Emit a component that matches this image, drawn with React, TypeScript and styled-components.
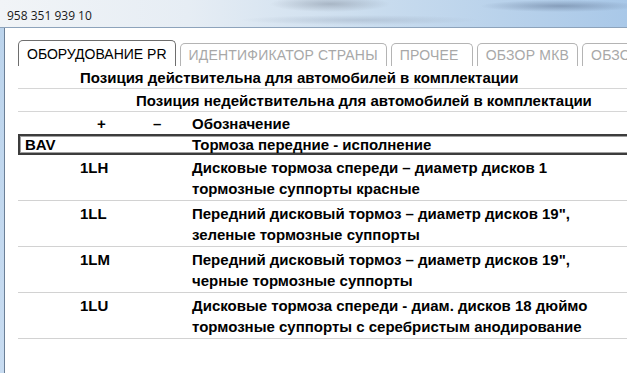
import styled, { createGlobalStyle } from 'styled-components';

type Item = {
  code: string;
  lines: string[];
};

const items: Item[] = [
  {
    code: '1LH',
    lines: ['Дисковые тормоза спереди – диаметр дисков 1', 'тормозные суппорты красные'],
  },
  {
    code: '1LL',
    lines: ['Передний дисковый тормоз – диаметр дисков 19",', 'зеленые тормозные суппорты'],
  },
  {
    code: '1LM',
    lines: ['Передний дисковый тормоз – диаметр дисков 19",', 'черные тормозные суппорты'],
  },
  {
    code: '1LU',
    lines: [
      'Дисковые тормоза спереди - диам. дисков 18 дюймо',
      'тормозные суппорты с серебристым анодирование',
    ],
  },
];

const tabs = ['ОБОРУДОВАНИЕ PR', 'ИДЕНТИФИКАТОР СТРАНЫ', 'ПРОЧЕЕ', 'ОБЗОР МКВ', 'ОБЗОР'];

const GlobalStyle = createGlobalStyle`
  html, body {
    margin: 0;
    padding: 0;
    background: #ffffff;
    overflow: hidden;
  }
  body {
    font-family: 'Liberation Sans', Arial, sans-serif;
  }
`;

export default function App() {
  return (
    <>
      <GlobalStyle />
      <Window>
        <TitleBar>
          <Caption>958 351 939 10</Caption>
        </TitleBar>
        <Body>
          <Frame />
          <Content>
            <TabStrip>
              {tabs.map((t, i) => (
                <Tab key={t} $active={i === 0}>
                  {t}
                </Tab>
              ))}
            </TabStrip>
            <Table>
              <HeadRow $line>
                <HeadCell $from={2}>Позиция действительна для автомобилей в комплектации</HeadCell>
              </HeadRow>
              <HeadRow $line>
                <HeadCell $from={3}>Позиция недействительна для автомобилей в комплектации</HeadCell>
              </HeadRow>
              <HeadRow>
                <Sign $from={2}>+</Sign>
                <Sign $from={3}>–</Sign>
                <HeadCell $from={4}>Обозначение</HeadCell>
              </HeadRow>
              <GroupRow>
                <GroupCode>BAV</GroupCode>
                <GroupText>Тормоза передние - исполнение</GroupText>
              </GroupRow>
              {items.map((it) => (
                <ItemRow key={it.code}>
                  <Code>{it.code}</Code>
                  <Desc>
                    {it.lines.map((l) => (
                      <div key={l}>{l}</div>
                    ))}
                  </Desc>
                </ItemRow>
              ))}
            </Table>
          </Content>
        </Body>
      </Window>
    </>
  );
}

const Window = styled.div`
  width: 627px;
  height: 373px;
  display: flex;
  flex-direction: column;
  overflow: hidden;
`;

const TitleBar = styled.div`
  height: 27px;
  flex-shrink: 0;
  display: flex;
  align-items: center;
  padding-left: 7px;
  background:
    radial-gradient(ellipse 60px 8px at 330px 4px, rgba(120, 130, 145, 0.45), transparent),
    radial-gradient(ellipse 80px 6px at 560px 6px, rgba(90, 110, 140, 0.5), transparent),
    radial-gradient(ellipse 120px 5px at 360px 20px, rgba(150, 165, 185, 0.4), transparent),
    linear-gradient(90deg, #f1f4f7 0%, #e6edf4 30%, #c9dcee 60%, #a9c8e8 100%);
  border-bottom: 1px solid #8da3bb;
`;

const Caption = styled.span`
  font-family: 'Open Sans', 'Noto Sans', sans-serif;
  font-size: 12px;
  color: #1a1a1a;
  margin-top: 4px;
`;

const Body = styled.div`
  flex: 1;
  display: flex;
  min-height: 0;
`;

const Frame = styled.div`
  width: 4px;
  flex-shrink: 0;
  background: linear-gradient(180deg, #bcd4ec, #c8dcf1);
  border-right: 1px solid #6b7f96;
`;

const Content = styled.div`
  flex: 1;
  background: #ffffff;
  padding: 12px 0 0 13px;
  overflow: hidden;
`;

const TabStrip = styled.div`
  display: flex;
  align-items: flex-end;
  gap: 4px;
  height: 26px;
  white-space: nowrap;
`;

const Tab = styled.div<{ $active?: boolean }>`
  box-sizing: border-box;
  height: ${({ $active }) => ($active ? '26px' : '23px')};
  min-width: 82px;
  padding: 0 8px;
  display: flex;
  align-items: center;
  font-size: 14px;
  letter-spacing: ${({ $active }) => ($active ? '0' : '0.2px')};
  color: ${({ $active }) => ($active ? '#000000' : '#a8a8a8')};
  background: #ffffff;
  border: 1px solid ${({ $active }) => ($active ? '#6e6e6e' : '#b4b4b4')};
  border-bottom: none;
  border-radius: 5px 5px 0 0;
  flex-shrink: 0;
`;

const Table = styled.div`
  width: 620px;
  font-size: 15px;
  font-weight: bold;
  color: #000000;
`;

const HeadRow = styled.div<{ $line?: boolean }>`
  display: grid;
  grid-template-columns: 62px 56px 56px 1fr;
  height: 22px;
  align-items: center;
  border-bottom: ${({ $line }) => ($line ? '1px solid #d6d6d6' : 'none')};
`;

const HeadCell = styled.div<{ $from: number }>`
  grid-column: ${({ $from }) => `${$from} / -1`};
  white-space: nowrap;
`;

const Sign = styled.div<{ $from: number }>`
  grid-column: ${({ $from }) => $from};
  padding-left: 17px;
`;

const GroupRow = styled.div`
  box-sizing: border-box;
  display: grid;
  grid-template-columns: 172px 1fr;
  height: 21px;
  align-items: center;
  border: 2px solid #3c3c3c;
  border-right: none;
  box-shadow: inset 0 0 0 1px #a0a0a0;
`;

const GroupCode = styled.div`
  padding-left: 5px;
`;

const GroupText = styled.div`
  white-space: nowrap;
`;

const ItemRow = styled.div`
  display: grid;
  grid-template-columns: 62px 112px 1fr;
  padding: 2px 0 1px;
  line-height: 21px;
  border-bottom: 1px solid #d2d2d2;
`;

const Code = styled.div`
  grid-column: 2;
`;

const Desc = styled.div`
  white-space: nowrap;
`;
